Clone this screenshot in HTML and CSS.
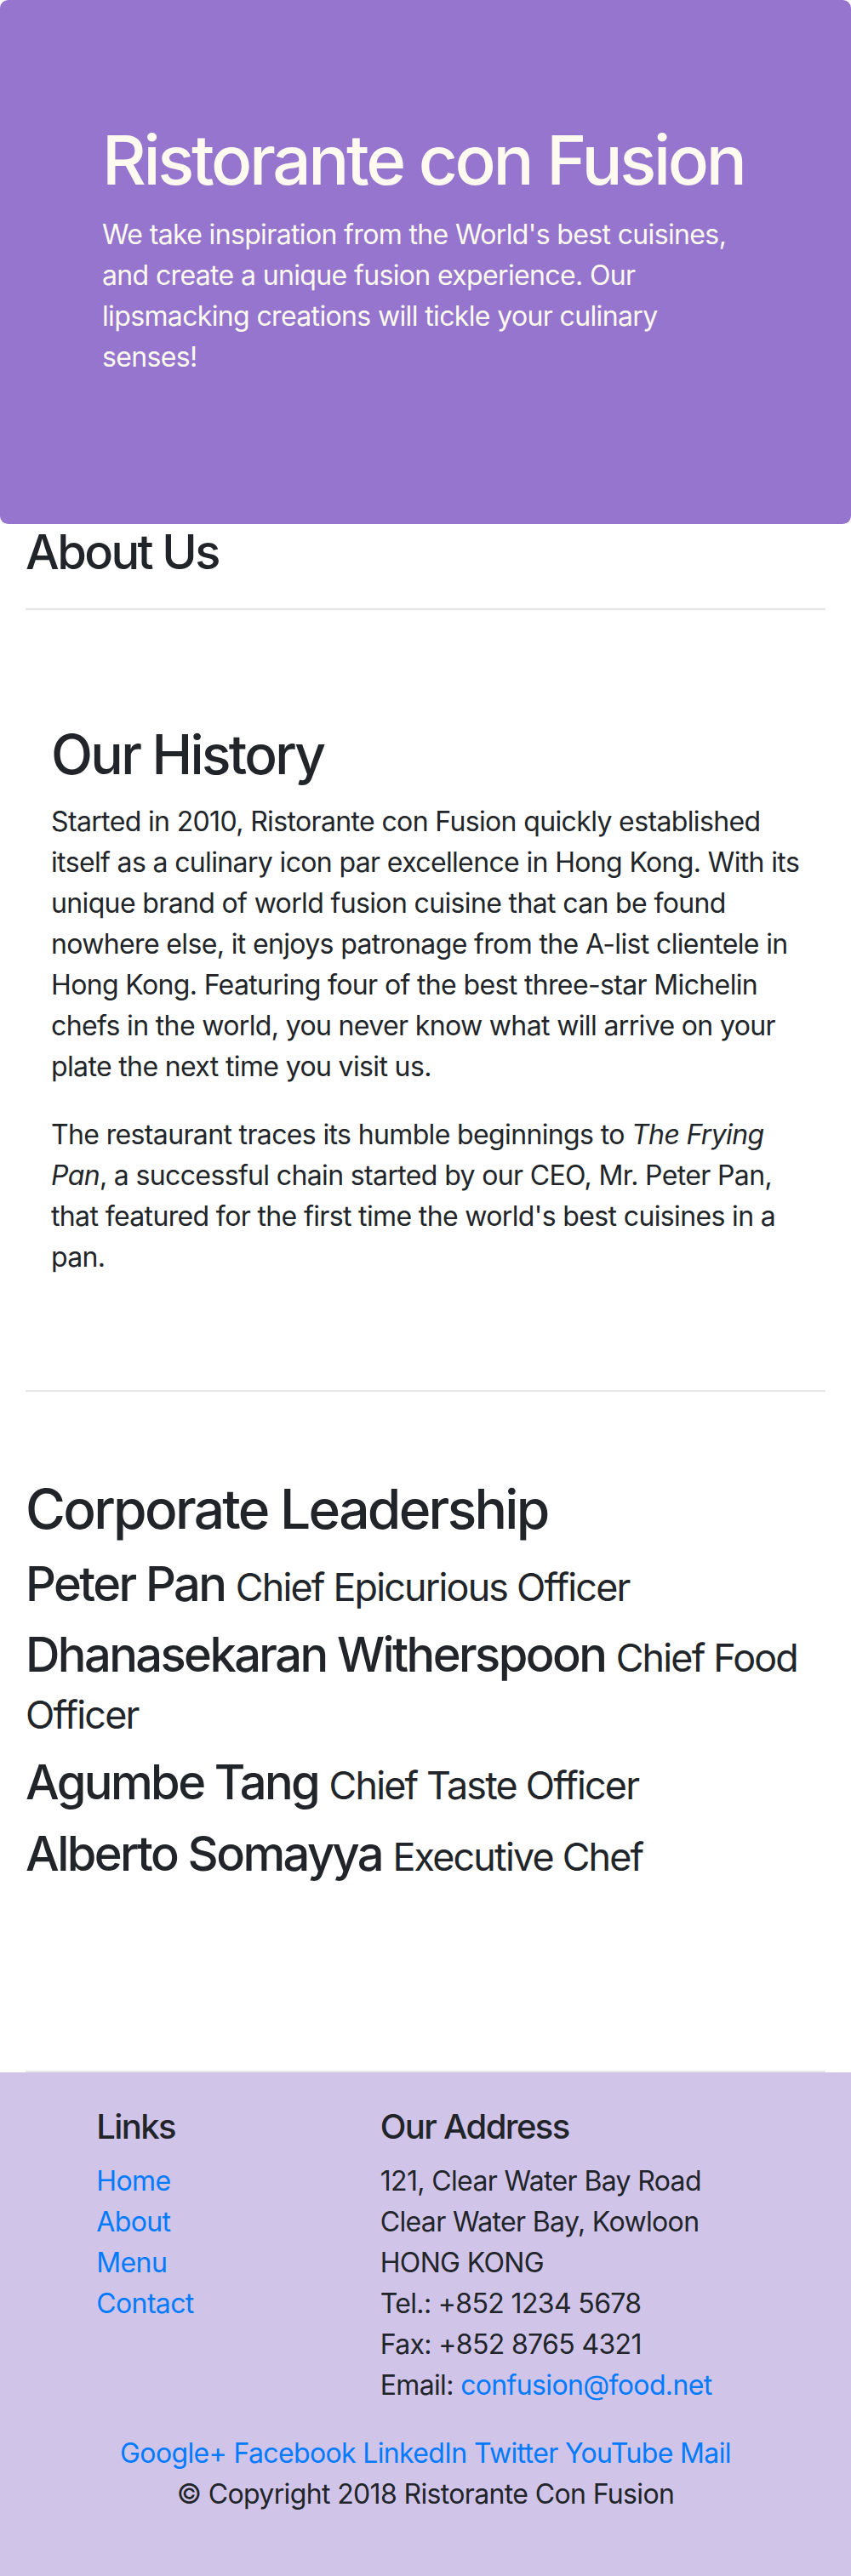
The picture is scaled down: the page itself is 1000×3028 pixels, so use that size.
FILE: index.html
```html
<!DOCTYPE html>
<html lang="en">
<head>
<meta charset="utf-8">
<title>Ristorante Con Fusion: About Us</title>
<link rel="stylesheet" href="styles.css">
</head>
<body>
<header class="jumbotron">
  <div class="container">
    <div class="row-header">
      <div class="col">
        <h1>Ristorante con Fusion</h1>
        <p>We take inspiration from the World's best cuisines, and create a unique fusion experience. Our lipsmacking creations will tickle your culinary senses!</p>
      </div>
    </div>
  </div>
</header>

<div class="container">
  <div class="row">
    <div class="col-12">
      <h3>About Us</h3>
      <hr>
    </div>
  </div>

  <div class="row-content">
    <div class="col-12">
      <h2>Our History</h2>
      <p>Started in 2010, Ristorante con Fusion quickly established itself as a culinary icon par excellence in Hong Kong. With its unique brand of world fusion cuisine that can be found nowhere else, it enjoys patronage from the A-list clientele in Hong Kong. Featuring four of the best three-star Michelin chefs in the world, you never know what will arrive on your plate the next time you visit us.</p>
      <p>The restaurant traces its humble beginnings to <em>The Frying Pan</em>, a successful chain started by our CEO, Mr. Peter Pan, that featured for the first time the world's best cuisines in a pan.</p>
    </div>
  </div>

  <div class="row-content leadership">
    <h2>Corporate Leadership</h2>
    <h3>Peter Pan <small>Chief Epicurious Officer</small></h3>
    <h3>Dhanasekaran Witherspoon <small>Chief Food Officer</small></h3>
    <h3>Agumbe Tang <small>Chief Taste Officer</small></h3>
    <h3>Alberto Somayya <small>Executive Chef</small></h3>
  </div>
</div>

<footer class="footer">
  <div class="container">
    <div class="row">
      <div class="col-links">
        <h5>Links</h5>
        <ul class="list-unstyled">
          <li><a href="#">Home</a></li>
          <li><a href="#">About</a></li>
          <li><a href="#">Menu</a></li>
          <li><a href="#">Contact</a></li>
        </ul>
      </div>
      <div class="col-address">
        <h5>Our Address</h5>
        <address>
          121, Clear Water Bay Road<br>
          Clear Water Bay, Kowloon<br>
          HONG KONG<br>
          Tel.: +852 1234 5678<br>
          Fax: +852 8765 4321<br>
          Email: <a href="#">confusion@food.net</a>
        </address>
      </div>
      <div class="col-social">
        <div class="text-center">
          <a href="#">Google+</a>
          <a href="#">Facebook</a>
          <a href="#">LinkedIn</a>
          <a href="#">Twitter</a>
          <a href="#">YouTube</a>
          <a href="#">Mail</a>
        </div>
      </div>
    </div>
    <div class="row row-center">
      <div class="col-auto">
        <p>© Copyright 2018 Ristorante Con Fusion</p>
      </div>
    </div>
  </div>
</footer>
</body>
</html>
```

FILE: styles.css
```css
html {
  font-size: 32px;
}

*,
*::before,
*::after {
  box-sizing: border-box;
}

body {
  margin: 0;
  font-family: Inter, "Noto Sans", "Liberation Sans", sans-serif;
  font-size: 1rem;
  line-height: 1.5;
  letter-spacing: -0.02em;
  color: #212529;
  background: #fff;
}

h1, h2, h3, h5 {
  margin: 0 0 16px 0;
  font-weight: 500;
  line-height: 1.2;
}

h1 { font-size: 80px; letter-spacing: -0.042em; }
h2 { font-size: 64px; letter-spacing: -0.042em; }
h3 { font-size: 56px; letter-spacing: -0.046em; }
h5 { font-size: 40px; letter-spacing: -0.04em; }

h3 small {
  font-size: 80%;
  font-weight: 400;
  letter-spacing: -0.04em;
}

p {
  margin: 0 0 32px 0;
}

a {
  color: #007bff;
  text-decoration: none;
}

.container {
  padding: 0 30px;
}

.row {
  display: flex;
  flex-wrap: wrap;
  margin: 0 -30px;
}

.col-12 {
  width: 100%;
  padding: 0 30px;
}

/* Jumbotron */
.jumbotron {
  margin: 0;
  padding: 140px 60px;
  background: #9575cd;
  color: floralwhite;
  border-radius: 9.6px;
}

.row-header {
  margin: 0 auto;
}

.row-header .col {
  padding: 0 30px;
}

hr {
  margin: 32px 0;
  border: 0;
  border-top: 2px solid rgba(0, 0, 0, 0.1);
  height: 0;
}

.row-content {
  min-height: 800px;
  padding: 100px 0;
  border-bottom: 2px solid #e8e8e8;
}

/* Footer */
.footer {
  background-color: #d1c4e9;
  padding: 40px 0;
}

.col-links {
  margin-left: 8.3333%;
  width: 33.3333%;
  padding: 0 30px;
}

.col-address {
  width: 58.3333%;
  padding: 0 30px;
}

.col-social {
  width: 100%;
  padding: 0 30px;
}

.text-center {
  text-align: center;
}

.list-unstyled {
  list-style: none;
  padding: 0;
  margin: 0 0 32px 0;
}

address {
  font-style: normal;
  margin: 0 0 32px 0;
}

.row-center {
  justify-content: center;
}

.col-auto {
  padding: 0 30px;
}
```
